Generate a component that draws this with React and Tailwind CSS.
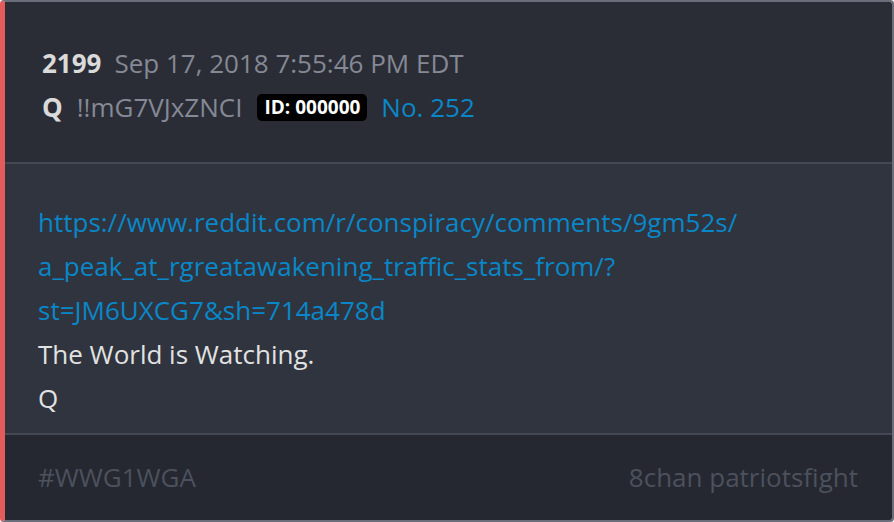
export default function App() {
  return (
    <div className="w-[894px] h-[522px] bg-[#f4f4f4]" style={{ fontFamily: '"Open Sans", "Noto Sans", sans-serif' }}>
      <div className="w-full h-full flex flex-col overflow-hidden rounded-[4px] border-2 border-[#6a6e7a] border-l-[5px] border-l-[#e35b5b]">
        <div className="bg-[#2a2d35] pl-[37px] pr-8 pt-[39px] pb-[33px] border-b-2 border-[#444852]">
          <div className="flex items-center h-[44px] text-[26px]">
            <span className="font-bold text-[#dadada]">2199</span>
            <span className="ml-[13px] text-[#858995]">Sep 17, 2018 7:55:46 PM EDT</span>
          </div>
          <div className="flex items-center h-[44px] text-[26px]">
            <span className="font-bold text-[#dadada]">Q</span>
            <span className="ml-[14px] text-[#858995]">!!mG7VJxZNCI</span>
            <span className="ml-[15px] bg-black text-white font-bold text-[19px] leading-[27px] px-[7px] rounded-[5px]">ID: 000000</span>
            <span className="ml-[14px] text-[#0a87c8]">No. 252</span>
          </div>
        </div>
        <div className="flex-1 bg-[#2f343e] pl-[33px] pr-8 pt-[36px] text-[26px] leading-[44px] border-b-2 border-[#444852]">
          <div className="text-[#0a87c8]">
            <div>https://www.reddit.com/r/conspiracy/comments/9gm52s/</div>
            <div>a_peak_at_rgreatawakening_traffic_stats_from/?</div>
            <div>st=JM6UXCG7&amp;sh=714a478d</div>
          </div>
          <div className="text-[#e2e2e2]">The World is Watching.</div>
          <div className="text-[#e2e2e2]">Q</div>
        </div>
        <div className="h-[85px] shrink-0 bg-[#252830] pl-[33px] pr-[34px] flex items-center justify-between text-[26px] text-[#4c515d]">
          <span>#WWG1WGA</span>
          <span>8chan patriotsfight</span>
        </div>
      </div>
    </div>
  );
}
